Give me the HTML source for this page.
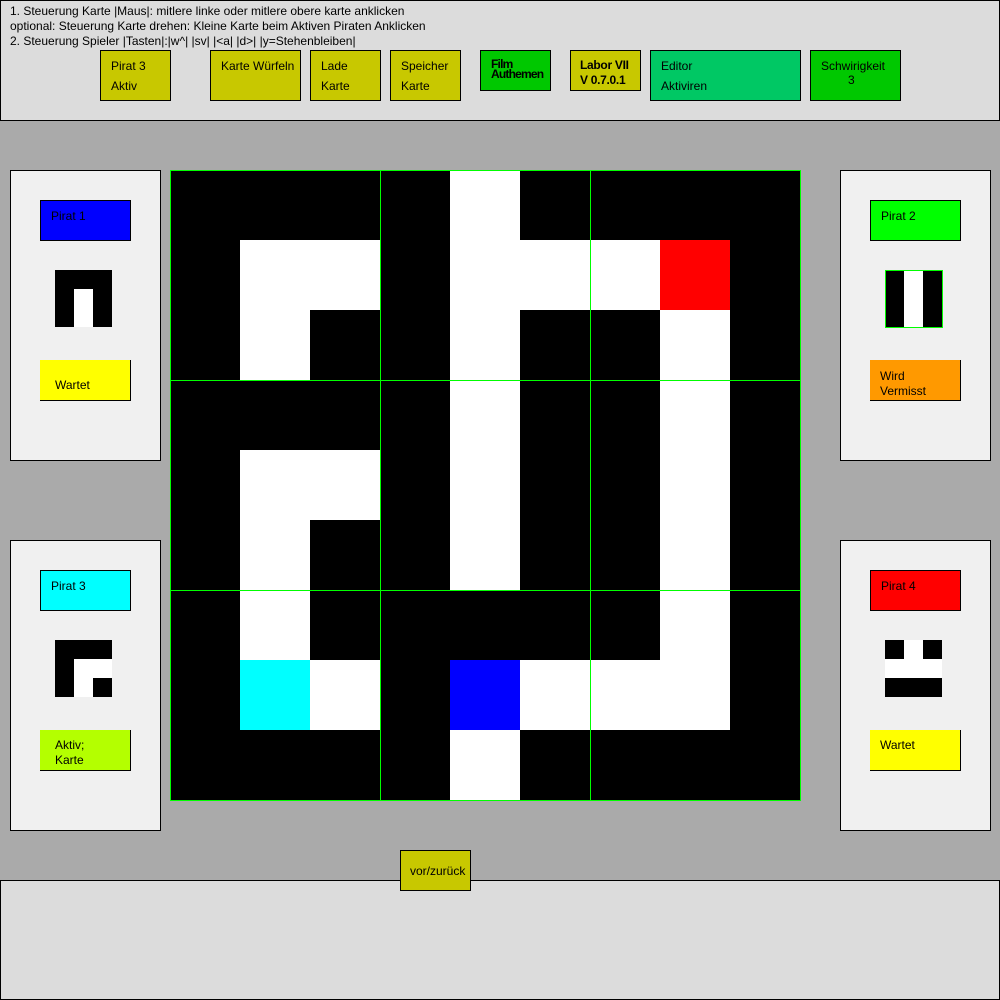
<!DOCTYPE html>
<html><head><meta charset="utf-8"><style>
*{margin:0;padding:0;box-sizing:border-box}
body{width:1000px;height:1000px;position:relative;background:#aaaaaa;font-family:"Liberation Sans",sans-serif;font-size:12px;color:#000;overflow:hidden}
div{position:absolute}
.b{border:1px solid #000}
.t{position:absolute;white-space:nowrap;line-height:14px}
.y{background:#c8c800}
.p{background:#f0f0f0;border:1px solid #000}
.c{background:#000}
.w{background:#fff}
</style></head><body>
<div class="b" style="left:0;top:0;width:1000px;height:121px;background:#dcdcdc"></div>
<div class="t" style="left:10px;top:4px">1. Steuerung Karte |Maus|: mitlere linke oder mitlere obere karte anklicken</div>
<div class="t" style="left:10px;top:19px">optional: Steuerung Karte drehen: Kleine Karte beim Aktiven Piraten Anklicken</div>
<div class="t" style="left:10px;top:34px">2. Steuerung Spieler |Tasten|:|w^| |sv| |&lt;a| |d&gt;| |y=Stehenbleiben|</div>

<div class="b y" style="left:100px;top:50px;width:71px;height:51px"><span class="t" style="left:10px;top:8px">Pirat 3</span><span class="t" style="left:10px;top:28px">Aktiv</span></div>
<div class="b y" style="left:210px;top:50px;width:91px;height:51px"><span class="t" style="left:10px;top:8px">Karte Würfeln</span></div>
<div class="b y" style="left:310px;top:50px;width:71px;height:51px"><span class="t" style="left:10px;top:8px">Lade</span><span class="t" style="left:10px;top:28px">Karte</span></div>
<div class="b y" style="left:390px;top:50px;width:71px;height:51px"><span class="t" style="left:10px;top:8px">Speicher</span><span class="t" style="left:10px;top:28px">Karte</span></div>
<div class="b" style="left:480px;top:50px;width:71px;height:41px;background:#00c800;font-weight:bold;font-size:12px;letter-spacing:-0.8px"><span class="t" style="left:10px;top:8px;line-height:10px">Film<br>Authemen</span></div>
<div class="b y" style="left:570px;top:50px;width:71px;height:41px;font-weight:bold;font-size:12px;letter-spacing:-0.3px"><span class="t" style="left:9px;top:7px;line-height:15px">Labor VII<br>V 0.7.0.1</span></div>
<div class="b" style="left:650px;top:50px;width:151px;height:51px;background:#00c864"><span class="t" style="left:10px;top:8px">Editor</span><span class="t" style="left:10px;top:28px">Aktiviren</span></div>
<div class="b" style="left:810px;top:50px;width:91px;height:51px;background:#00c800"><span class="t" style="left:10px;top:8px">Schwirigkeit</span><span class="t" style="left:37px;top:22px">3</span></div>

<div class="p" style="left:10px;top:170px;width:151px;height:291px"></div>
<div class="b" style="left:40px;top:200px;width:91px;height:41px;background:#0000ff"><span class="t" style="left:10px;top:8px">Pirat 1</span></div>
<div class="c" style="left:55px;top:270px;width:57px;height:57px"></div><div class="w" style="left:74px;top:289px;width:19px;height:38px"></div>
<div style="left:40px;top:360px;width:91px;height:41px;background:#ff0;border-right:1px solid #000;border-bottom:1px solid #000"><span class="t" style="left:15px;top:18px">Wartet</span></div>

<div class="p" style="left:10px;top:540px;width:151px;height:291px"></div>
<div class="b" style="left:40px;top:570px;width:91px;height:41px;background:#0ff"><span class="t" style="left:10px;top:8px">Pirat 3</span></div>
<div class="c" style="left:55px;top:640px;width:57px;height:57px"></div><div class="w" style="left:74px;top:659px;width:38px;height:19px"></div><div class="w" style="left:74px;top:678px;width:19px;height:19px"></div>
<div style="left:40px;top:730px;width:91px;height:41px;background:#b4ff00;border-right:1px solid #000;border-bottom:1px solid #000"><span class="t" style="left:15px;top:8px;line-height:15px">Aktiv;<br>Karte</span></div>

<div class="p" style="left:840px;top:170px;width:151px;height:291px"></div>
<div class="b" style="left:870px;top:200px;width:91px;height:41px;background:#00ff00"><span class="t" style="left:10px;top:8px">Pirat 2</span></div>
<div class="c" style="left:885px;top:270px;width:58px;height:58px;border:1px solid #0f0"></div><div class="w" style="left:904px;top:271px;width:19px;height:56px"></div>
<div style="left:870px;top:360px;width:91px;height:41px;background:#ff9900;border-right:1px solid #000;border-bottom:1px solid #000"><span class="t" style="left:10px;top:9px;line-height:15px">Wird<br>Vermisst</span></div>

<div class="p" style="left:840px;top:540px;width:151px;height:291px"></div>
<div class="b" style="left:870px;top:570px;width:91px;height:41px;background:#f00"><span class="t" style="left:10px;top:8px">Pirat 4</span></div>
<div class="c" style="left:885px;top:640px;width:57px;height:57px"></div><div class="w" style="left:904px;top:640px;width:19px;height:19px"></div><div class="w" style="left:885px;top:659px;width:57px;height:19px"></div>
<div style="left:870px;top:730px;width:91px;height:41px;background:#ff0;border-right:1px solid #000;border-bottom:1px solid #000"><span class="t" style="left:10px;top:8px">Wartet</span></div>

<div class="c" style="left:170px;top:170px;width:631px;height:631px"></div>
<div class="w" style="left:450px;top:170px;width:70px;height:420px"></div>
<div class="w" style="left:240px;top:240px;width:140px;height:70px"></div>
<div class="w" style="left:240px;top:310px;width:70px;height:70px"></div>
<div class="w" style="left:520px;top:240px;width:140px;height:70px"></div>
<div style="left:660px;top:240px;width:70px;height:70px;background:#f00"></div>
<div class="w" style="left:660px;top:310px;width:70px;height:420px"></div>
<div class="w" style="left:240px;top:450px;width:140px;height:70px"></div>
<div class="w" style="left:240px;top:520px;width:70px;height:140px"></div>
<div style="left:240px;top:660px;width:70px;height:70px;background:#0ff"></div>
<div class="w" style="left:310px;top:660px;width:70px;height:70px"></div>
<div style="left:450px;top:660px;width:70px;height:70px;background:#00f"></div>
<div class="w" style="left:520px;top:660px;width:140px;height:70px"></div>
<div class="w" style="left:450px;top:730px;width:70px;height:70px"></div>
<div style="left:170px;top:170px;width:631px;height:631px;border:1px solid #0f0"></div>
<div style="left:380px;top:170px;width:1px;height:631px;background:#0f0"></div>
<div style="left:590px;top:170px;width:1px;height:631px;background:#0f0"></div>
<div style="left:170px;top:380px;width:631px;height:1px;background:#0f0"></div>
<div style="left:170px;top:590px;width:631px;height:1px;background:#0f0"></div>

<div class="b" style="left:0;top:880px;width:1000px;height:120px;background:#dcdcdc"></div>
<div class="b y" style="left:400px;top:850px;width:71px;height:41px"><span class="t" style="left:9px;top:13px">vor/zurück</span></div>
</body></html>
